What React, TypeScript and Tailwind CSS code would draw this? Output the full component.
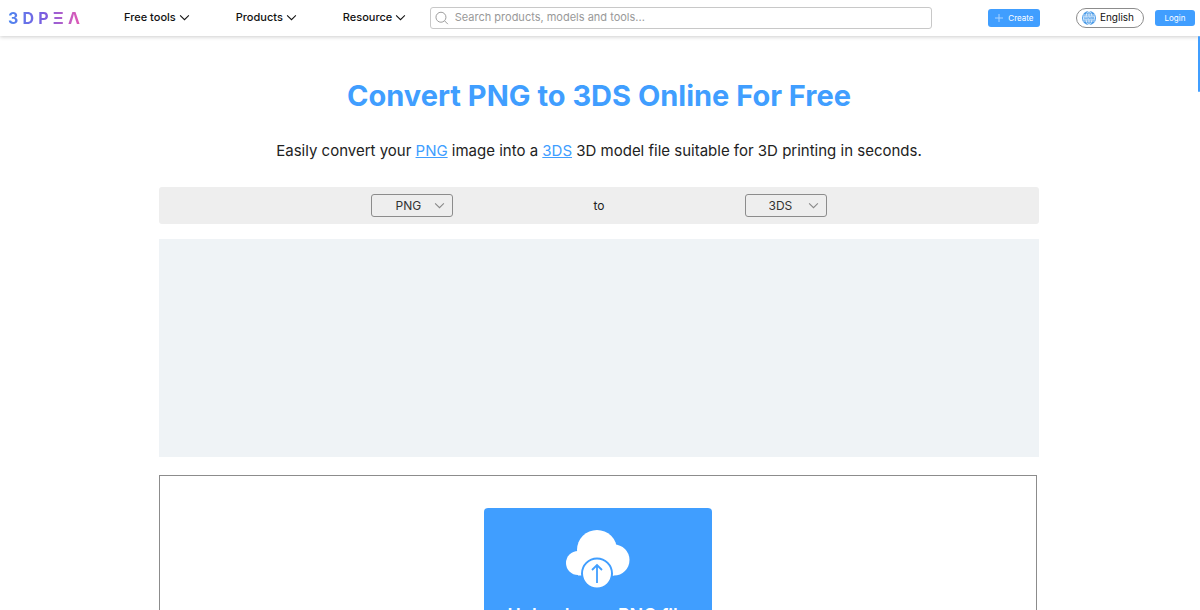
import { useState } from "react";

const IMAGE_FORMATS = ["PNG", "JPG", "SVG", "STL"];
const MODEL_FORMATS = ["3DS", "STL", "OBJ", "GLB"];

function Chevron({ className }: { className: string }) {
  return (
    <svg viewBox="0 0 12 8" fill="none" stroke="currentColor" strokeWidth="1.2" className={className} aria-hidden="true">
      <path d="M1 1.5 6 6.5 11 1.5" />
    </svg>
  );
}

function Logo() {
  return (
    <a
      href="#"
      aria-label="3DPEA"
      className="flex w-[72px] justify-between bg-gradient-to-r from-[#4a86f0] via-[#7a5ce0] to-[#e056b4] bg-clip-text text-base leading-5 font-bold text-transparent"
    >
      <span>3</span>
      <span>D</span>
      <span>P</span>
      <span>Ξ</span>
      <span>Λ</span>
    </a>
  );
}

function NavItem({ label }: { label: string }) {
  return (
    <button type="button" className="flex items-center gap-[3px] text-[11px] font-medium whitespace-nowrap text-[#111]">
      {label}
      <Chevron className="h-[7px] w-[11px]" />
    </button>
  );
}

function GlobeIcon() {
  return (
    <svg viewBox="0 0 14 14" className="h-3.5 w-3.5" aria-hidden="true">
      <circle cx="7" cy="7" r="7" fill="#4a9be8" />
      <g fill="none" stroke="#fff" strokeWidth="0.7">
        <ellipse cx="7" cy="7" rx="3" ry="6.8" />
        <path d="M7 0v14M1 4h12M1 10h12" />
      </g>
      <rect x="1" y="5.2" width="12" height="3.6" fill="#cfe5fb" />
      <path d="M2 5.8 3 8.2 4 6.3 5 8.2 6 5.8M6.4 5.8l.8 2.4.9-1.9.9 1.9.8-2.4M10.2 5.8l.6 2.4.6-1.9.6 1.9" fill="none" stroke="#4a9be8" strokeWidth="0.6" />
    </svg>
  );
}

function Header() {
  return (
    <header className="relative z-10 flex h-9 shrink-0 items-center bg-white pr-[5px] pb-px pl-2 shadow-[0_1px_4px_rgba(0,0,0,0.2)]">
      <Logo />
      <nav className="ml-11 flex items-center gap-[46px]">
        <NavItem label="Free tools" />
        <NavItem label="Products" />
        <NavItem label="Resource" />
      </nav>
      <label className="ml-6 flex h-[22px] flex-1 items-center gap-1.5 rounded-[3px] border border-[#c8c8c8] px-1">
        <svg viewBox="0 0 14 14" fill="none" stroke="#999" strokeWidth="1" className="h-3.5 w-3.5" aria-hidden="true">
          <circle cx="6.2" cy="6.2" r="5.2" />
          <path d="m10 10 3.4 3.4" />
        </svg>
        <input
          type="search"
          aria-label="Search"
          placeholder="Search products, models and tools..."
          className="w-full text-[11px] outline-none placeholder:text-[#999]"
        />
      </label>
      <button
        type="button"
        className="ml-14 flex h-[18px] w-[52px] items-center justify-center gap-1 rounded-[3px] bg-[#409eff] text-[8px] text-white"
      >
        <svg viewBox="0 0 10 10" stroke="#b5d9ff" strokeWidth="0.9" className="h-2.5 w-2.5" aria-hidden="true">
          <path d="M5 1v8M1 5h8" />
        </svg>
        Create
      </button>
      <button
        type="button"
        className="ml-9 flex h-5 items-center gap-1 rounded-full border border-[#8c8c8c] pr-[9px] pl-[5px] text-[10px] text-[#111]"
      >
        <GlobeIcon />
        English
      </button>
      <button type="button" className="ml-[11px] h-4 w-10 rounded-[3px] bg-[#409eff] text-[8px] text-white">
        Login
      </button>
    </header>
  );
}

interface FormatSelectProps {
  label: string;
  value: string;
  options: string[];
  onChange: (value: string) => void;
}

function FormatSelect({ label, value, options, onChange }: FormatSelectProps) {
  return (
    <div className="relative flex">
      <select
        aria-label={label}
        value={value}
        onChange={(e) => onChange(e.target.value)}
        className="h-[23px] w-[82px] appearance-none rounded-[3px] border border-[#8c8c8c] pl-[23px] text-[12px] text-[#333]"
      >
        {options.map((o) => (
          <option key={o}>{o}</option>
        ))}
      </select>
      <Chevron className="pointer-events-none absolute top-2 right-2 h-[7px] w-[11px] text-[#888]" />
    </div>
  );
}

function CloudUpload() {
  return (
    <svg viewBox="0 0 64 58" className="h-[58px] w-16" aria-hidden="true">
      <g fill="#fff">
        <circle cx="31" cy="20" r="20" />
        <circle cx="12" cy="33" r="12" />
        <circle cx="48" cy="30" r="15.5" />
        <path d="M12 20h36v25.5H12z" />
      </g>
      <circle cx="31" cy="43.5" r="15" fill="#fff" stroke="#409eff" strokeWidth="2" />
      <path d="M31 53V35M26 40l5-5 5 5" fill="none" stroke="#409eff" strokeWidth="1.8" />
    </svg>
  );
}

export default function App() {
  const [from, setFrom] = useState("PNG");
  const [to, setTo] = useState("3DS");

  return (
    <div className="relative flex h-screen flex-col overflow-hidden bg-white font-['Inter','Liberation_Sans',sans-serif]">
      <Header />

      <main className="mx-auto w-full max-w-[882px] pr-0.5">
        <h1 className="mt-10 text-center text-[29px] leading-10 font-bold text-[#409eff]">
          Convert {from} to {to} Online For Free
        </h1>
        <p className="mt-[23px] text-center text-[15px] leading-6 text-[#222]">
          Easily convert your <a href="#" className="text-[#409eff] underline">{from}</a> image into a{" "}
          <a href="#" className="text-[#409eff] underline">{to}</a> 3D model file suitable for 3D printing in seconds.
        </p>

        {/* Format picker */}
        <div className="mt-6 flex h-[37px] items-center justify-center gap-[140px] rounded-[3px] bg-[#eee]">
          <FormatSelect label="From format" value={from} options={IMAGE_FORMATS} onChange={setFrom} />
          <span className="text-[12px] text-[#222]">to</span>
          <FormatSelect label="To format" value={to} options={MODEL_FORMATS} onChange={setTo} />
        </div>

        {/* Ad slot */}
        <div className="mt-[15px] h-[218px] bg-[#eff3f6]" />

        {/* Upload area */}
        <section className="mt-[18px] mr-0.5 border border-[#8c8c8c] py-8">
          <button
            type="button"
            className="mx-auto flex w-[228px] flex-col items-center rounded-[4px] bg-[#409eff] pt-[22px] pb-8 text-[18px] font-semibold text-white"
          >
            <CloudUpload />
            <span className="mt-[14px]">Upload your {from} file</span>
          </button>
        </section>
      </main>

      {/* Scroll thumb */}
      <div className="absolute top-9 right-0 z-20 h-14 w-0.5 rounded-full bg-[#409eff]" />
    </div>
  );
}
